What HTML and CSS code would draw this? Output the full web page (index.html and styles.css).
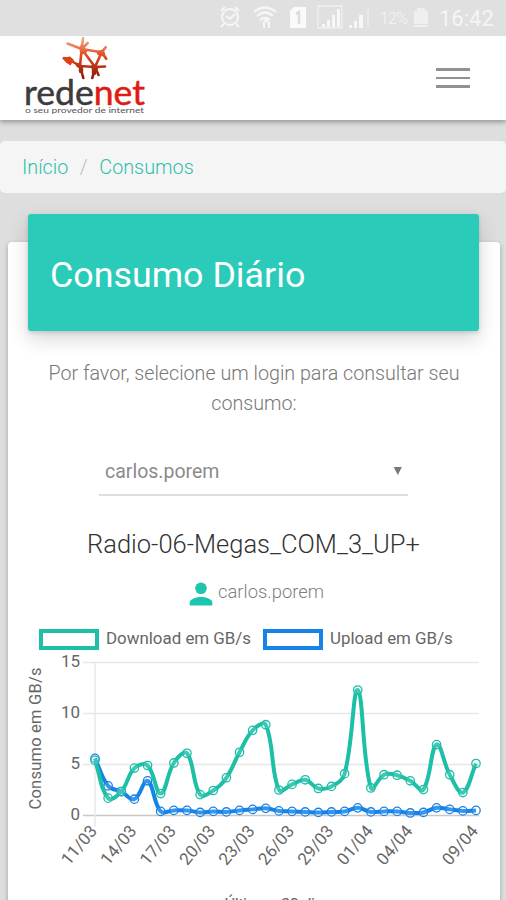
FILE: index.html
```
<!DOCTYPE html>
<html lang="pt-BR">
  <head>
    <meta charset="UTF-8" />
    <meta name="viewport" content="width=device-width, initial-scale=1.0" />
    <title>Consumo Diário</title>
    <link rel="stylesheet" href="styles.css">
  </head>
  <body>
    <div class="statusbar">
      <svg class="icons" width="230" height="36" viewBox="0 0 230 36">
        <!-- alarm -->
        <g fill="none" stroke="#f6f6f6" stroke-width="2">
          <circle cx="30" cy="17" r="8" />
          <path d="M26 16l4 3 5-5M21 11l4-4M35 7l4 4M24 24l-3 3M36 24l3 3" />
        </g>
        <!-- wifi -->
        <g fill="none" stroke="#f6f6f6" stroke-width="2.2">
          <path d="M54 12q11-9 22 0M57 16q8-7 16 0M60 20q5-4 10 0" />
          <path d="M64 28v-5l2-3 3 3v5" />
        </g>
        <!-- sim card -->
        <path d="M94 7h12v21H90V11z" fill="#fafafa" />
        <path d="M96 14l3-2v12" fill="none" stroke="#dcdcdc" stroke-width="2.4" />
        <!-- signal -->
        <path d="M118 6h24v22h-24z" fill="none" stroke="#f0f0f0" stroke-width="1.3" />
        <path d="M122 27v-3h3v3zM127 27v-7h3v7zM132 27V15h3v12zM137 27V9h3v18zM149 28v-3h3v3zM154 28v-7h3v7zM159 28V15h4v13z" fill="#f7f7f7" />
        <path d="M168 7v21" stroke="#f0f0f0" />
        <text class="battery-text" x="180" y="24" textLength="28">12%</text>
        <path d="M217 8h8v3h3v13h-14V11h3zM214 25h14v2h-14z" fill="#efefef" />
      </svg>
      <span class="clock">16:42</span>
    </div>

    <div class="navbar">
      <svg class="logo" width="130" height="84" viewBox="0 0 130 84">
        <defs>
          <linearGradient id="fire" gradientUnits="userSpaceOnUse" x1="0" y1="0" x2="0" y2="44">
            <stop offset="0" stop-color="#f7b59c" />
            <stop offset=".45" stop-color="#e04a1e" />
            <stop offset="1" stop-color="#861407" />
          </linearGradient>
        </defs>
        <g fill="none" stroke="url(#fire)" stroke-linecap="round" stroke-linejoin="round">
          <path stroke-width="2.6" d="M63 2l-1.300 11L60 30l3.300 12M47.500 7.500L61.700 13l20 3.300L75 31l-2.700 11M61.700 13L75 31l3.500 8M48 23l12 7 15 1 10-.5M81.700 16.300l4-5M81.700 16.300l4.500 6.500M61.700 13l6-6M44 22l4 1" />
          <path stroke-width="4.500" d="M62 11v5l3-1M58 29l3 2M73 31l3 1M79 17l3-1 1 2M61 33v2M74 34v3" />
        </g>
        <path fill="#dc4216" d="M42 22l8-1.500 4 3.500-3.500 5.500-4.500-3z" />
        <text class="logo-name" x="4" y="68.500" textLength="121" lengthAdjust="spacingAndGlyphs">rede<tspan class="logo-red">net</tspan></text>
        <text class="logo-sub" x="5" y="77" textLength="119" lengthAdjust="spacingAndGlyphs">o seu provedor de internet</text>
      </svg>
      <div class="toggle">
        <span></span>
        <span></span>
        <span></span>
      </div>
    </div>

    <div class="breadcrumb">
      <a>Início</a>
      <span class="sep">/</span>
      <a>Consumos</a>
    </div>

    <div class="card">
      <div class="card-header">Consumo Diário</div>
      <p class="intro">Por favor, selecione um login para consultar seu consumo:</p>
      <div class="select">
        <span>carlos.porem</span>
        <svg width="10" height="10" viewBox="0 0 10 10"><path d="M.7 1h8.2L4.8 9z" fill="#777" /></svg>
      </div>
      <h4 class="plan">Radio-06-Megas_COM_3_UP+</h4>
      <div class="user">
        <svg width="24" height="24" viewBox="0 0 24 24" fill="#1bc5ae">
          <circle cx="12" cy="6.3" r="5.8" />
          <path d="M.7 23.5v-3C.7 16.800 8 15 12 15s11.300 1.800 11.300 5.500v3z" />
        </svg>
        <span>carlos.porem</span>
      </div>
      <div class="legend">
        <span class="box download"></span>
        <span class="label-download">Download em GB/s</span>
        <span class="box upload"></span>
        <span>Upload em GB/s</span>
      </div>
      <svg id="chart" width="492" height="260" viewBox="0 0 492 260"></svg>
    </div>

    <script>
      const ns = "http://www.w3.org/2000/svg";
      const chart = document.querySelector("#chart");

      const download = [5.4, 1.7, 2.35, 4.65, 4.9, 2.15, 5.15, 6.1, 2.05, 2.45, 3.7, 6.2, 8.35, 8.9, 2.5, 3.05, 3.5, 2.65, 2.85, 4.1, 12.3, 2.7, 4, 3.95, 3.4, 2.55, 6.95, 4, 2.25, 5.1];
      const upload = [5.6, 2.9, 2.35, 1.6, 3.4, 0.4, 0.5, 0.5, 0.3, 0.4, 0.35, 0.5, 0.6, 0.7, 0.45, 0.4, 0.35, 0.3, 0.35, 0.4, 0.75, 0.35, 0.4, 0.4, 0.25, 0.3, 0.75, 0.6, 0.45, 0.5];
      const labels = { 0: "11/03", 3: "14/03", 6: "17/03", 9: "20/03", 12: "23/03", 15: "26/03", 18: "29/03", 21: "01/04", 24: "04/04", 29: "09/04" };

      const left = 87, right = 468, top0 = 12.5, bottom = 165.5;
      const px = (i) => left + (i * (right - left)) / 29;
      const py = (v) => bottom - (v * (bottom - top0)) / 15;

      function add(name, attrs, text) {
        const el = document.createElementNS(ns, name);
        for (const k in attrs) el.setAttribute(k, attrs[k]);
        if (text) el.textContent = text;
        chart.appendChild(el);
      }

      // grid and y axis
      for (const v of [0, 5, 10, 15]) {
        add("line", { class: v ? "grid" : "grid zero", x1: left - 12, x2: right + 3, y1: py(v), y2: py(v) });
        add("text", { class: "tick", x: 72, y: py(v) + 4, "text-anchor": "end" }, String(v));
      }
      add("line", { class: "grid", x1: left, x2: left, y1: top0, y2: bottom + 11 });

      // x axis
      for (const i in labels) {
        add("text", { class: "tick date", "text-anchor": "end", transform: `translate(${px(+i) + 3} ${bottom + 16}) rotate(-50)` }, labels[i]);
      }
      add("text", { class: "axis", "text-anchor": "middle", transform: "translate(33 88.5) rotate(-90)", textLength: 142 }, "Consumo em GB/s");
      add("text", { class: "axis", x: 270, y: 260, "text-anchor": "middle", textLength: 107 }, "Últimos 30 dias");

      // smooth line, control points kept inside the plot
      function series(data, cls) {
        const p = data.map((v, i) => [px(i), py(v)]);
        const clamp = (y) => Math.max(top0, Math.min(bottom, y));
        const c = p.map((cur, i) => {
          const a = p[i - 1] || cur, b = p[i + 1] || cur;
          const d1 = Math.hypot(cur[0] - a[0], cur[1] - a[1]);
          const d2 = Math.hypot(b[0] - cur[0], b[1] - cur[1]);
          const f1 = (0.4 * d1) / (d1 + d2), f2 = (0.4 * d2) / (d1 + d2);
          return [
            cur[0] - f1 * (b[0] - a[0]), clamp(cur[1] - f1 * (b[1] - a[1])),
            cur[0] + f2 * (b[0] - a[0]), clamp(cur[1] + f2 * (b[1] - a[1])),
          ];
        });
        let d = `M${p[0]}`;
        for (let i = 1; i < p.length; i++) {
          d += `C${c[i - 1][2]},${c[i - 1][3]} ${c[i][0]},${c[i][1]} ${p[i]}`;
        }
        add("path", { class: "line " + cls, d });
        p.forEach(([x, y]) => add("circle", { class: "dot " + cls, cx: x, cy: y, r: 4.2 }));
      }
      series(upload, "up");
      series(download, "down");
    </script>
  </body>
</html>
```
FILE: styles.css
```
* {
  box-sizing: border-box;
}
body {
  margin: 0;
  height: 900px;
  overflow: hidden;
  background: #dedede;
  font-family: Roboto, "Liberation Sans", sans-serif;
  font-weight: 300;
  display: flex;
  flex-direction: column;
}
.statusbar {
  height: 36px;
  flex-shrink: 0;
  background: #e0e0e0;
  display: flex;
  justify-content: flex-end;
  padding-right: 13px;
}
.icons {
  margin-right: 9px;
}
.battery-text {
  font-size: 16px;
  fill: #f5f5f5;
}
.clock {
  width: 54px;
  font-size: 22px;
  font-weight: 400;
  line-height: 37px;
  color: #f5f5f5;
  white-space: nowrap;
}
.navbar {
  height: 84px;
  flex-shrink: 0;
  background: #fff;
  box-shadow: 0 2px 5px rgba(0, 0, 0, 0.35);
  clip-path: inset(0 0 -12px 0);
  display: flex;
  justify-content: space-between;
  align-items: center;
  padding: 0 36px 0 20px;
}
.logo-name {
  font-family: Lato, sans-serif;
  font-size: 35px;
  font-weight: 400;
  fill: #3d3b3e;
  stroke: #3d3b3e;
  stroke-width: 0.5;
}
.logo-red {
  fill: #df1b12;
  stroke: #df1b12;
}
.logo-sub {
  font-family: Lato, sans-serif;
  font-size: 8px;
  font-weight: 400;
  fill: #555;
}
.toggle {
  width: 34px;
  display: flex;
  flex-direction: column;
  gap: 6px;
}
.toggle span {
  height: 2.5px;
  background: #929292;
}
.breadcrumb {
  height: 52px;
  flex-shrink: 0;
  margin-top: 21px;
  padding-left: 22px;
  background: #f5f5f5;
  border-radius: 5px;
  display: flex;
  align-items: center;
  font-size: 19.8px;
  color: #2ebfaa;
}
.sep {
  width: 31px;
  text-align: center;
  color: #bbb;
}
.card {
  height: 700px;
  flex-shrink: 0;
  margin: 49px 6px 0 8px;
  background: #fff;
  border-radius: 4px;
  box-shadow: 0 2px 5px rgba(0, 0, 0, 0.28);
  display: flex;
  flex-direction: column;
}
.card-header {
  height: 117px;
  flex-shrink: 0;
  margin: -28px 21px 0 20px;
  padding: 3px 0 0 22px;
  background: #2bcbba;
  border-radius: 3px;
  box-shadow: 0 8px 20px rgba(0, 0, 0, 0.16), 0 2px 4px rgba(0, 0, 0, 0.12);
  color: #fff;
  font-size: 35.8px;
  font-weight: 400;
  line-height: 116px;
}
.intro {
  width: 430px;
  margin: 28px 0 0 31px;
  text-align: center;
  font-size: 19.7px;
  line-height: 30px;
  color: #777;
}
.select {
  width: 309px;
  height: 48px;
  margin: 29px 0 0 91px;
  padding: 0 5px 0 6px;
  border-bottom: 2px solid #dedede;
  display: flex;
  align-items: center;
  justify-content: space-between;
  font-size: 19.5px;
  font-weight: 400;
  color: #8b8b8b;
}
.plan {
  margin: 32px 0 0;
  padding-right: 1px;
  text-align: center;
  font-size: 25.5px;
  font-weight: 300;
  line-height: 32px;
  color: #333;
}
.user {
  height: 30px;
  margin: 16px 0 0 181px;
  display: flex;
  align-items: center;
  gap: 5px;
  font-size: 18.4px;
  color: #808080;
}
.user svg {
  margin-top: 6px;
}
.legend {
  height: 22px;
  margin: 22px 0 0 31px;
  display: flex;
  align-items: center;
  gap: 7px;
  font-size: 16.9px;
  font-weight: 400;
  color: #666;
  white-space: nowrap;
}
.legend span:not(.box) {
  padding-bottom: 2px;
}
.box {
  width: 60px;
  height: 21px;
  flex-shrink: 0;
  border: 4px solid #1dbfa7;
}
.label-download {
  margin-right: 5px;
}
.upload {
  border-color: #1583e8;
}
#chart {
  flex-shrink: 0;
}
.grid {
  stroke: #e8e8e8;
  stroke-width: 1.5;
}
.zero {
  stroke: #c8c8c8;
}
.tick {
  font-size: 17px;
  font-weight: 400;
  fill: #666;
}
.axis {
  font-size: 16.5px;
  font-weight: 400;
  fill: #666;
}
.line {
  fill: none;
  stroke-width: 4;
}
.dot {
  fill: rgba(255, 255, 255, 0.15);
  stroke-width: 1.3;
}
.down {
  stroke: #1dbfa7;
}
.up {
  stroke: #1583e8;
}
```
